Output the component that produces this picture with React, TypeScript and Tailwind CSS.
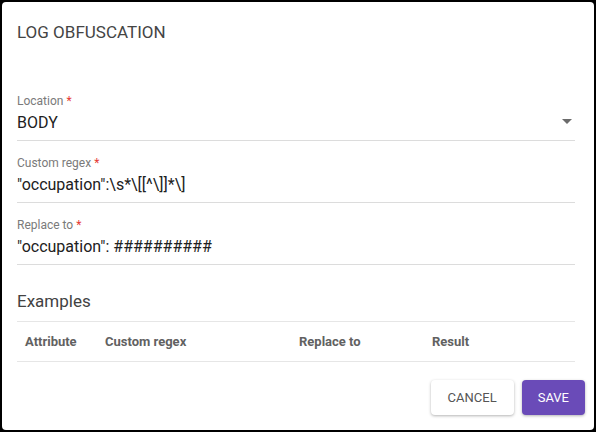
export default function App() {
  const fields = [
    { label: 'Custom regex', value: '"occupation":\\s*\\[[^\\]]*\\]' },
    { label: 'Replace to', value: '"occupation": ##########' },
  ];

  return (
    <div className="w-[596px] h-[432px] bg-black p-[2px] font-['Roboto',sans-serif]">
      <div className="h-full bg-white rounded-[4px] flex flex-col">
        <div className="pl-[15px] pr-[19px] pt-[18px]">
          <h2 className="text-[17px] leading-[24px] text-[#444]">LOG OBFUSCATION</h2>

          <div className="mt-[49px] border-b border-[#dcdcdc] pb-[5px]">
            <div className="text-[12px] leading-[16px] text-[#7a7a7a]">
              Location <span className="text-[#e53935]">*</span>
            </div>
            <div className="mt-[2px] flex items-center justify-between">
              <span className="text-[16px] leading-[24px] text-[#212121]">BODY</span>
              <svg width="24" height="24" viewBox="0 0 24 24" className="-mr-[4px] -mt-[4px] fill-[#6b6b6b]">
                <path d="M7 10l5 5 5-5z" />
              </svg>
            </div>
          </div>

          {fields.map((f) => (
            <div key={f.label} className="mt-[14px] border-b border-[#dcdcdc] pb-[5px]">
              <div className="text-[12px] leading-[16px] text-[#7a7a7a]">
                {f.label} <span className="text-[#e53935]">*</span>
              </div>
              <div className="mt-[2px] text-[16px] leading-[24px] text-[#212121]">{f.value}</div>
            </div>
          ))}

          <h3 className="mt-[24px] text-[17px] leading-[24px] text-[#424242]">Examples</h3>

          <div className="mt-[8px] border-y border-[#e6e6e6] h-[41px] grid grid-cols-[80px_194px_133px_1fr] items-center text-[13px] font-bold text-[#616161]">
            <div className="pl-[8px]">Attribute</div>
            <div className="pl-[8px]">Custom regex</div>
            <div className="pl-[8px]">Replace to</div>
            <div className="pl-[8px]">Result</div>
          </div>
        </div>

        <div className="mt-[18px] flex justify-end gap-[8px] pr-[9px]">
          <button className="h-[35px] px-[17px] rounded-[4px] bg-white text-[13px] text-[#555] shadow-[0_1px_3px_rgba(0,0,0,0.3)]">
            CANCEL
          </button>
          <button className="h-[35px] px-[16px] rounded-[4px] bg-[#6a4bb8] text-[13px] text-white shadow-[0_1px_3px_rgba(0,0,0,0.3)]">
            SAVE
          </button>
        </div>
      </div>
    </div>
  );
}
